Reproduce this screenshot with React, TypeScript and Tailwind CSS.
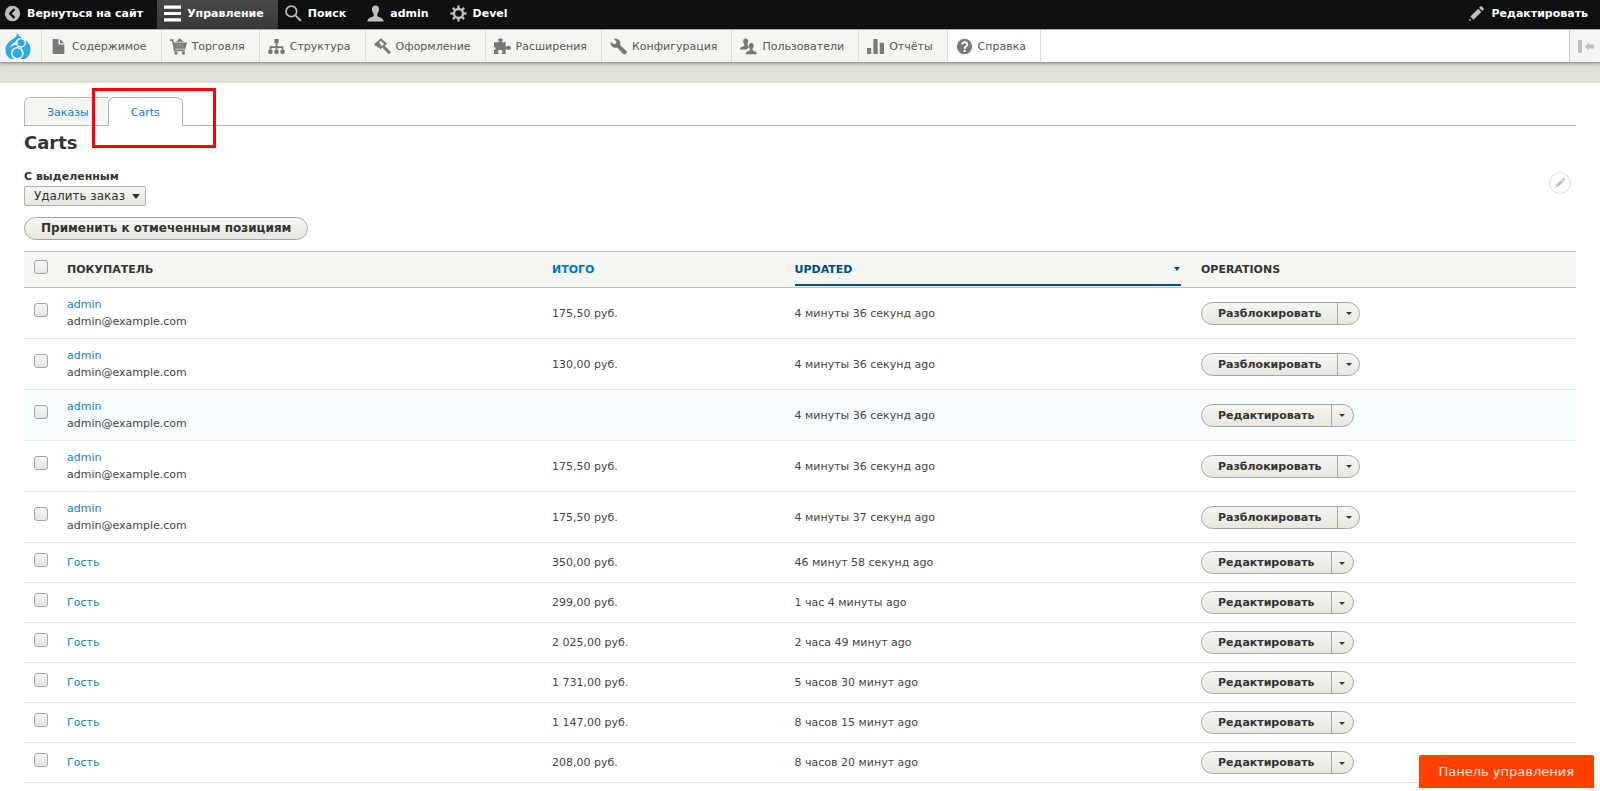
import type { ReactNode } from 'react';

const Icon = ({ children, className = 'text-[#787878]' }: { children: ReactNode; className?: string }) => (
  <svg viewBox="0 0 16 16" fill="currentColor" aria-hidden="true" className={`size-[17px] shrink-0 ${className}`}>
    {children}
  </svg>
);

const pencil = (
  <>
    <path d="M14.6 3L13 1.400c-.4-.4-1-.4-1.400 0l-1.200 1.200 3 3 1.200-1.200c.4-.4.4-1 0-1.400z" />
    <path d="M9.600 3.500l3 3-7.400 7.300-3-3z" />
    <path d="M.9 14.800c-.1.200.1.400.3.300l2-.7-1.600-1.600z" />
  </>
);

const barItems = [
  {
    label: 'Управление',
    active: true,
    icon: <path d="M0 0.500h16v3H0zM0 6.500h16v3H0zM0 12.500h16v3H0z" />,
  },
  {
    label: 'Поиск',
    icon: (
      <>
        <circle cx="6" cy="6" r="5" fill="none" stroke="currentColor" strokeWidth="1.600" />
        <path d="M9.500 10.600l1.100-1.100 4.900 4.500-1.500 1.500z" />
      </>
    ),
  },
  {
    label: 'admin',
    icon: (
      <path d="M8 .5C5.700.5 4.700 2 4.700 4c0 1.800.6 3.200 1.500 4.200.3 1 .2 2.100-.5 2.600-1.200.9-5.200.9-5.400 4.700h15.400c-.2-3.800-4.200-3.800-5.400-4.700-.7-.5-.8-1.600-.5-2.600.9-1 1.500-2.400 1.500-4.200 0-2-1-3.500-3.300-3.500z" />
    ),
  },
  {
    label: 'Devel',
    icon: (
      <>
        <circle cx="8" cy="8" r="4.200" fill="none" stroke="currentColor" strokeWidth="2.200" />
        <path
          d="M8 .5v3M8 12.500v3M.5 8h3M12.500 8h3M2.700 2.700l2.100 2.100M11.200 11.200l2.100 2.100M2.700 13.300l2.100-2.100M11.200 4.800l2.100-2.100"
          stroke="currentColor"
          strokeWidth="2.200"
        />
      </>
    ),
  },
];

const menuItems = [
  { label: 'Содержимое', icon: <path d="M2.500 1H8v5h5.500v9h-11zM9.300 1l4.200 4H9.300z" /> },
  {
    label: 'Торговля',
    icon: (
      <>
        <path d="M0 1.200h3.200l1.700 9.600h9.300v1.600H3.700L2 2.800H0z" />
        <path d="M4.800 3.600L7 2.300 9.200.2l2.300 2.100 2.200 1.300zM3.600 4.200H16l-1.500 5.800H4.700z" />
        <path d="M6.900 5.200v3.600M9.500 5.200v3.600M12.100 5.200v3.600" stroke="#f5f5f2" strokeWidth=".3" />
        <circle cx="5.600" cy="14.200" r="1.600" />
        <circle cx="12.600" cy="14.200" r="1.600" />
      </>
    ),
  },
  {
    label: 'Структура',
    icon: (
      <>
        <path d="M6 1h4v4H8.800v2.700h5.700v3.800h-1.600V9.300H8.800v2.200H7.200V9.300H3.100v2.200H1.500V7.700h5.700V5H6z" />
        <circle cx="2.300" cy="13" r="2.200" />
        <circle cx="8" cy="13" r="2.200" />
        <circle cx="13.700" cy="13" r="2.200" />
      </>
    ),
  },
  {
    label: 'Оформление',
    icon: (
      <>
        <path d="M6.700.3L.2 5.600l1.200 2.200 1-.5.7 1.900 1.300-.5 1.700 2 6.300-5.300zM6.600 2.600L9.400 5.800 7.400 7.500 4.500 4.300z" fillRule="evenodd" />
        <path d="M7.900 9.200l2.200-1.800 5.900 6-2 2z" />
      </>
    ),
  },
  {
    label: 'Расширения',
    icon: (
      <path d="M0 4h4.500c.5-.9-.8-1.300-.8-2.300C3.700.8 4.600.5 6 .5s2.400.3 2.400 1.200c0 1-1.300 1.400-.9 2.300H11v4c.9.600 1.300-.8 2.600-.8 1.400 0 2.300.8 2.300 2s-.9 2.100-2.300 2.100c-1.300 0-1.700-1.400-2.600-.9V15H7.400c-.5-1 .8-1.300.8-2.200 0-1-1-1.500-2.300-1.500s-2.300.5-2.300 1.500c0 .9 1.300 1.200.8 2.200H0v-4c.7-.4 1.600.2 1.600-1S.7 9 0 8.500z" />
    ),
  },
  {
    label: 'Конфигурация',
    icon: (
      <path d="M15.200 12L9.600 6.800C10 4.800 9.600 3 8.200 1.700 6.900.5 5.100.3 3.600.9l2.500 2.400-.5 2.100-2.200.4L.9 3.500C.3 5 .6 6.700 1.900 8c1.300 1.200 3 1.500 4.700 1l5.600 5.800c.8.8 2 .8 2.900 0 .9-.9.9-2 .1-2.800z" />
    ),
  },
  {
    label: 'Пользователи',
    icon: (
      <>
        <path d="M5.300.5C3.700.5 3 1.500 3 3c0 1.200.4 2 1 2.700.2.900.1 1.500-.4 1.900C2.800 8.200.2 8.200 0 10.800h6c.6-.6 1.500-.9 2-1.300.3-.4.3-.8.1-1.300-.8-.9-1-2-.9-3.300.1-.6.3-1.100.6-1.500C7.700 1.600 7 .5 5.300.5z" />
        <path d="M10.600 4.700c-1.600 0-2.300 1-2.300 2.500 0 1.200.4 2 1 2.700.2.900.1 1.500-.4 1.900-.8.6-3.400.6-3.600 3.600H16c-.2-3-2.900-3-3.700-3.600-.5-.4-.6-1-.4-1.900.6-.7 1-1.500 1-2.700 0-1.500-.7-2.500-2.300-2.500z" />
      </>
    ),
  },
  {
    label: 'Отчёты',
    icon: (
      <>
        <rect x="0" y="9.500" width="4" height="5.500" rx=".5" />
        <rect x="6" y="1" width="4" height="14" rx=".5" />
        <rect x="12" y="4.500" width="4" height="10.500" rx=".5" />
      </>
    ),
  },
  {
    label: 'Справка',
    icon: (
      <>
        <circle cx="8" cy="8" r="7.200" />
        <path d="M5.700 6.200c0-3 4.900-3 4.900-.2C10.600 7.700 8.200 7.800 8.200 10" fill="none" stroke="#fff" strokeWidth="1.800" />
        <circle cx="8.200" cy="12.200" r="1.100" fill="#fff" />
      </>
    ),
  },
];

const carts = [
  { name: 'admin', mail: 'admin@example.com', total: '175,50 руб.', updated: '4 минуты 36 секунд ago', action: 'Разблокировать' },
  { name: 'admin', mail: 'admin@example.com', total: '130,00 руб.', updated: '4 минуты 36 секунд ago', action: 'Разблокировать' },
  { name: 'admin', mail: 'admin@example.com', total: '', updated: '4 минуты 36 секунд ago', action: 'Редактировать', hover: true },
  { name: 'admin', mail: 'admin@example.com', total: '175,50 руб.', updated: '4 минуты 36 секунд ago', action: 'Разблокировать' },
  { name: 'admin', mail: 'admin@example.com', total: '175,50 руб.', updated: '4 минуты 37 секунд ago', action: 'Разблокировать' },
  { name: 'Гость', total: '350,00 руб.', updated: '46 минут 58 секунд ago', action: 'Редактировать' },
  { name: 'Гость', total: '299,00 руб.', updated: '1 час 4 минуты ago', action: 'Редактировать' },
  { name: 'Гость', total: '2 025,00 руб.', updated: '2 часа 49 минут ago', action: 'Редактировать' },
  { name: 'Гость', total: '1 731,00 руб.', updated: '5 часов 30 минут ago', action: 'Редактировать' },
  { name: 'Гость', total: '1 147,00 руб.', updated: '8 часов 15 минут ago', action: 'Редактировать' },
  { name: 'Гость', total: '208,00 руб.', updated: '8 часов 20 минут ago', action: 'Редактировать' },
  { name: '', total: '', updated: '', action: 'Редактировать' },
];

const Checkbox = ({ label }: { label: string }) => (
  <input
    type="checkbox"
    aria-label={label}
    className="block size-[14px] appearance-none rounded-[3px] border border-[#a2a2a2] bg-linear-to-b from-[#f6f6f6] to-[#e6e6e6]"
  />
);

const DropButton = ({ label }: { label: string }) => (
  <div className="inline-flex h-[23px] overflow-hidden rounded-full border border-[#a6a6a6] bg-linear-to-b from-[#f6f6f3] to-[#e7e7df] align-middle">
    <button type="button" className="px-4 font-bold text-[#333]">
      {label}
    </button>
    <button type="button" aria-label="Другие действия" className="flex w-[22px] items-center justify-center border-l border-[#a6a6a6]">
      <svg viewBox="0 0 6 3" className="mt-px h-[3px] w-[6px]" aria-hidden="true">
        <path d="M0 0h6L3 3z" fill="#333" />
      </svg>
    </button>
  </div>
);

const Logo = () => (
  <svg viewBox="0 0 26 27" className="h-[27px] w-[26px]" aria-hidden="true">
    <path d="M12.500 0c.8 3.200 3.200 4 6 5.800C23 8.800 25.500 12 25.500 16.500c0 4-2 7.500-5.500 9.500H5.500C2 24 .5 20.500.5 16.500c0-4.500 3-7.500 6.500-9.700C10 5 11.800 3.200 12.500 0z" fill="#2ba9e0" />
    <circle cx="16" cy="9.800" r="4.900" fill="#f5f5f2" />
    <path d="M11.800 7.500C9.500 9.500 6 11 4.800 14.500l4.500-2.700 3 1z" fill="#f5f5f2" />
    <circle cx="12.300" cy="20.200" r="6.300" fill="#f5f5f2" />
    <circle cx="16" cy="9.800" r="3.500" fill="#2ba9e0" />
    <circle cx="12.300" cy="20.200" r="4.700" fill="#2ba9e0" />
  </svg>
);

export default function App() {
  return (
    <div className="relative h-screen overflow-hidden bg-white font-['DejaVu_Sans',sans-serif] text-[11px] leading-[17px] text-[#444]">
      <header>
        <nav aria-label="Панель инструментов" className="flex h-[29px] bg-[#0f0f0f] font-bold text-white">
          <a href="#" className="flex items-center gap-[6px] pr-[14px] pb-[2px] pl-1">
            <Icon className="text-[#bebebe]">
              <circle cx="8" cy="8" r="7.200" />
              <path d="M9.800 3.800L5.800 8l4 4.200" fill="none" stroke="#0f0f0f" strokeWidth="2.200" />
            </Icon>
            Вернуться на сайт
          </a>
          {barItems.map((item) => (
            <a
              key={item.label}
              href="#"
              className={`flex items-center gap-[6px] pr-[14px] pb-[2px] pl-[7px] ${item.active ? 'bg-linear-to-b from-[#494949] to-[#383838]' : ''}`}
            >
              <Icon className={item.active ? 'text-white' : 'text-[#bebebe]'}>{item.icon}</Icon>
              {item.label}
            </a>
          ))}
          <button type="button" className="ml-auto flex items-center gap-[6px] pr-3 pb-[2px] font-bold">
            <Icon className="text-[#bebebe]">{pencil}</Icon>
            Редактировать
          </button>
        </nav>
        <nav aria-label="Управление" className="relative flex h-[34px] border-t border-b border-t-[#aaa] border-b-[#999b96] bg-white text-[#565656] shadow-[0_1px_3px_rgba(0,0,0,0.3)]">
          <a href="#" aria-label="Drupal" className="flex w-[42px] items-center border-r border-[#ddd] bg-[#f5f5f2] pl-[5px]">
            <Logo />
          </a>
          {menuItems.map((item) => (
            <a
              key={item.label}
              href="#"
              className="flex items-center gap-[5px] border-r border-[#ddd] bg-[#f5f5f2] pr-[14px] pl-2 last-of-type:bg-white"
            >
              <Icon>{item.icon}</Icon>
              {item.label}
            </a>
          ))}
          <button type="button" aria-label="Вертикальная ориентация" className="ml-auto flex w-[31px] items-center border-l border-[#ccc] bg-[#f5f5f5] pl-2">
            <svg viewBox="0 0 17 13" className="h-[13px] w-[17px]" fill="#bebebe" aria-hidden="true">
              <path d="M0 0h4v13H0zM7 6.500L11 2.500v2h5v4h-5v2z" />
            </svg>
          </button>
        </nav>
      </header>
      <div className="h-5 bg-[#e0e0d8]" />

      <main className="px-6 pt-[14px]">
        <div className="relative">
          <nav aria-label="Вкладки" className="flex h-[29px] border-b border-[#b3b3b3]">
            <a href="#" className="-mb-px h-[29px] rounded-tl-md border border-r-0 border-[#b8b8b8] bg-[#f5f5f2] pt-[6px] pr-[19px] pl-[22px] text-[#1380c4]">
              Заказы
            </a>
            <a href="#" aria-current="page" className="-mb-px h-[29px] rounded-t-md border border-b-0 border-[#b3b3b3] bg-white px-[22px] pt-[6px] text-[#1380c4]">
              Carts
            </a>
          </nav>
          <div className="pointer-events-none absolute -top-[9px] left-[68px] h-[60px] w-[124px] border-3 border-[#f00]" />
        </div>
        <h1 className="mt-[5px] text-[18px] leading-6 font-bold text-[#333]">Carts</h1>

        <form>
          <div className="flex justify-between pt-[13px]">
            <div>
              <label htmlFor="action" className="block font-bold text-[#333]">
                С выделенным
              </label>
              <div className="relative mt-px w-[122px]">
                <select
                  id="action"
                  className="block h-5 w-full appearance-none rounded-xs border border-[#b0b0b0] bg-linear-to-b from-[#f6f6f3] to-[#e7e7df] pl-[9px] text-[12px] text-[#333]"
                >
                  <option>Удалить заказ</option>
                </select>
                <svg viewBox="0 0 8 5" className="pointer-events-none absolute top-2 right-[6px] h-[5px] w-2" aria-hidden="true">
                  <path d="M0 0h8L4 5z" fill="#333" />
                </svg>
              </div>
            </div>
            <button type="button" aria-label="Редактировать" className="mt-[4px] mr-[5px] flex size-[22px] items-center justify-center rounded-full border border-[#ddd]">
              <svg viewBox="0 0 16 16" className="size-3" fill="#bebebe" aria-hidden="true">
                {pencil}
              </svg>
            </button>
          </div>
          <button
            type="button"
            className="mt-[11px] block h-[23px] rounded-full border border-[#a6a6a6] bg-linear-to-b from-[#f6f6f3] to-[#e7e7df] px-4 text-[12px] font-bold text-[#333]"
          >
            Применить к отмеченным позициям
          </button>

          <table className="mt-[11px] w-full table-fixed text-left">
            <thead>
              <tr className="h-9 border-t border-b border-[#bfbfba] bg-[#f5f5f2] text-[#333]">
                <th className="w-[33px] pb-[5px] pl-[10px]">
                  <Checkbox label="Выбрать все" />
                </th>
                <th className="w-5/16 pl-[10px]">ПОКУПАТЕЛЬ</th>
                <th className="w-5/32 pl-[10px]">
                  <a href="#" className="text-[#0074bd]">
                    ИТОГО
                  </a>
                </th>
                <th aria-sort="descending" className="w-11/42 px-[10px] pb-px align-bottom">
                  <a href="#" className="flex h-[33px] items-center justify-between border-b-2 border-[#004f80] pt-px text-[#004f80]">
                    UPDATED
                    <svg viewBox="0 0 6 4" className="mr-px h-1 w-[6px]" aria-hidden="true">
                      <path d="M0 0h6L3 4z" fill="#004f80" />
                    </svg>
                  </a>
                </th>
                <th className="pl-[10px]">OPERATIONS</th>
              </tr>
            </thead>
            <tbody>
              {carts.map((cart, i) => (
                <tr
                  key={i}
                  className={`border-b border-[#e6e4df] ${cart.mail ? 'h-[51px]' : 'h-10'} ${cart.hover ? 'bg-[#f7fcff]' : ''}`}
                >
                  <td className="pb-[6px] pl-[10px]">
                    <Checkbox label={`Выбрать заказ ${i + 1}`} />
                  </td>
                  <td className="pl-[10px]">
                    <a href="#" className="text-[#1380c4]">
                      {cart.name}
                    </a>
                    {cart.mail && <div>{cart.mail}</div>}
                  </td>
                  <td className="pl-[10px]">{cart.total}</td>
                  <td className="pl-[10px]">{cart.updated}</td>
                  <td className="pl-[10px]">
                    <DropButton label={cart.action} />
                  </td>
                </tr>
              ))}
            </tbody>
          </table>
        </form>
      </main>

      <button type="button" className="fixed right-[6px] bottom-[3px] h-[33px] rounded-t-xs bg-[#ff4000] px-5 text-[13px] text-[#ffe8df]">
        Панель управления
      </button>
    </div>
  );
}
